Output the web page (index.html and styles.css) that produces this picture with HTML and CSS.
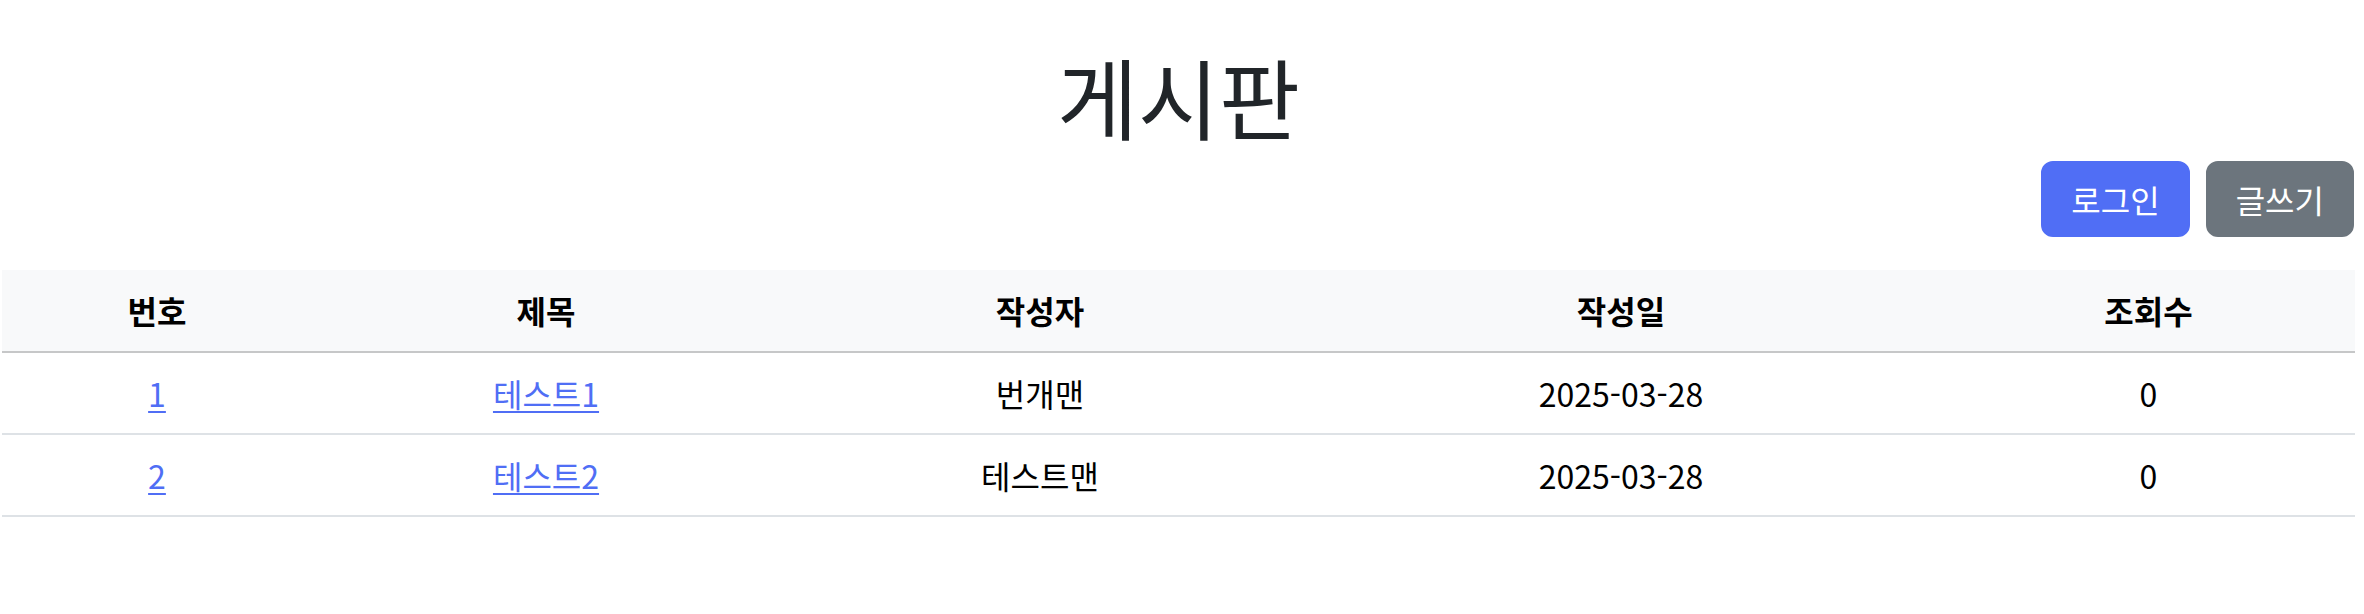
FILE: index.html
```html
<!DOCTYPE html>
<html lang="ko">
<head>
<meta charset="utf-8">
<title>게시판</title>
<link rel="stylesheet" href="styles.css">
</head>
<body>
<div class="page">
  <h1 class="title">게시판</h1>
  <div class="actions">
    <a class="btn btn-primary" href="#">로그인</a>
    <a class="btn btn-secondary" href="#">글쓰기</a>
  </div>
  <table class="board">
    <colgroup>
      <col class="c-no"><col class="c-title"><col class="c-author"><col class="c-date"><col class="c-views">
    </colgroup>
    <thead>
      <tr><th>번호</th><th>제목</th><th>작성자</th><th>작성일</th><th>조회수</th></tr>
    </thead>
    <tbody>
      <tr><td><a href="#">1</a></td><td><a href="#">테스트1</a></td><td>번개맨</td><td>2025-03-28</td><td>0</td></tr>
      <tr><td><a href="#">2</a></td><td><a href="#">테스트2</a></td><td>테스트맨</td><td>2025-03-28</td><td>0</td></tr>
    </tbody>
  </table>
</div>
</body>
</html>
```

FILE: styles.css
```css
html, body {
  margin: 0;
  padding: 0;
  background: #fff;
}
body {
  font-family: "Noto Sans CJK KR", "Noto Sans", sans-serif;
  color: #000;
}
.page {
  padding: 0 9px 0 2px;
}
.title {
  margin: 42px 0 0;
  font-size: 88px;
  line-height: 106px;
  font-weight: 400;
  text-align: center;
  color: #212529;
}
.actions {
  display: flex;
  justify-content: flex-end;
  gap: 16px;
  margin-top: 13px;
  padding-right: 1px;
}
.btn {
  display: inline-block;
  font-size: 32px;
  line-height: 48px;
  padding: 12px 28px;
  border: 2px solid transparent;
  border-radius: 12px;
  color: #fff;
  text-decoration: none;
}
.btn-primary {
  background: #506ef5;
  border-color: #506ef5;
}
.btn-secondary {
  background: #6c757d;
  border-color: #6c757d;
}
.board {
  width: 2353px;
  margin-top: 33px;
  border-collapse: collapse;
  table-layout: fixed;
  font-size: 32px;
  line-height: 48px;
}
.c-no { width: 310px; }
.c-title { width: 468px; }
.c-author { width: 520px; }
.c-date { width: 642px; }
.c-views { width: 413px; }
.board th, .board td {
  text-align: center;
  padding: 16px 8px;
}
.board thead th {
  background: #f8f9fa;
  font-weight: 700;
  color: #000;
  padding-bottom: 17px;
  border-bottom: 2px solid #c6c7c8;
}
.board tbody td {
  border-bottom: 2px solid #dee2e6;
  color: #000;
}
.board a {
  color: #506ef5;
  text-decoration: underline;
  text-decoration-thickness: 2px;
  text-underline-offset: 4px;
}
```
